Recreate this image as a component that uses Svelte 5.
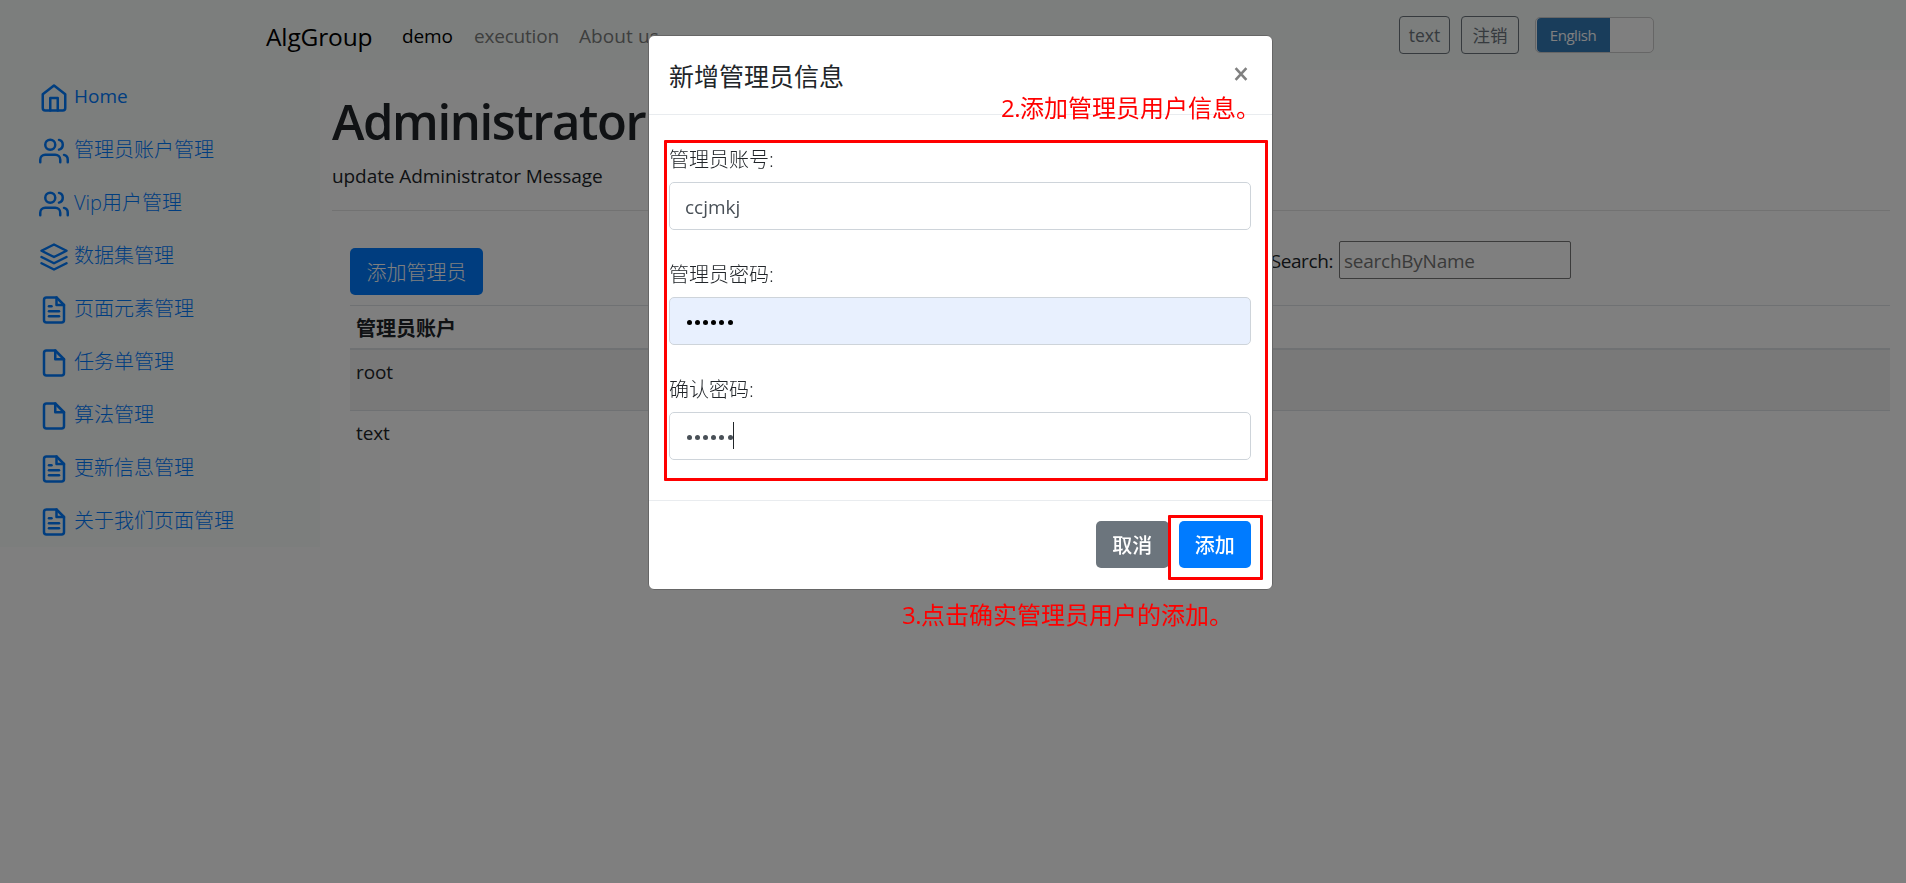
<script>
  const menu = [
    { icon: 'home', label: 'Home', latin: true },
    { icon: 'users', label: '管理员账户管理' },
    { icon: 'users', label: 'Vip用户管理' },
    { icon: 'layers', label: '数据集管理' },
    { icon: 'fileText', label: '页面元素管理' },
    { icon: 'file', label: '任务单管理' },
    { icon: 'file', label: '算法管理' },
    { icon: 'fileText', label: '更新信息管理' },
    { icon: 'fileText', label: '关于我们页面管理' }
  ];
  const icons = {
    home: ['M3 9l9-7 9 7v11a2 2 0 0 1-2 2H5a2 2 0 0 1-2-2z', 'M9 22V12h6v10'],
    users: [
      'M17 21v-2a4 4 0 0 0-4-4H5a4 4 0 0 0-4 4v2',
      'M5 7a4 4 0 1 0 8 0a4 4 0 1 0-8 0',
      'M23 21v-2a4 4 0 0 0-3-3.87',
      'M16 3.13a4 4 0 0 1 0 7.75'
    ],
    layers: ['M12 2L2 7l10 5 10-5z', 'M2 17l10 5 10-5', 'M2 12l10 5 10-5'],
    file: ['M13 2H6a2 2 0 0 0-2 2v16a2 2 0 0 0 2 2h12a2 2 0 0 0 2-2V9z', 'M13 2v7h7'],
    fileText: [
      'M14 2H6a2 2 0 0 0-2 2v16a2 2 0 0 0 2 2h12a2 2 0 0 0 2-2V8z',
      'M14 2v6h6',
      'M16 13H8',
      'M16 17H8',
      'M10 9H8'
    ]
  };
  const accounts = ['root', 'text'];
  const dots = [0, 1, 2, 3, 4, 5];
</script>

<div class="page">
  <header class="navbar">
    <span class="brand">AlgGroup</span>
    <nav>
      <span class="active demo">demo</span>
      <span class="execution">execution</span>
      <span class="about">About us</span>
    </nav>
    <div class="tools">
      <button class="outline user">text</button>
      <button class="outline logout">注销</button>
      <div class="switch"><span class="on">English</span></div>
    </div>
  </header>

  <div class="body">
    <aside>
      {#each menu as item}
        <div class="item">
          <svg viewBox="0 0 24 24">
            {#each icons[item.icon] as d}<path {d} />{/each}
          </svg>
          <span class:latin={item.latin}>{item.label}</span>
        </div>
      {/each}
    </aside>

    <main>
      <h1>Administrator</h1>
      <p class="lead"><span>update Administrator Message</span></p>
      <section>
        <div class="toolbar">
          <button class="primary add">添加管理员</button>
          <div class="search">
            <span>Search:</span>
            <div class="search-box"><span>searchByName</span></div>
          </div>
        </div>
        <div class="table">
          <div class="head">管理员账户</div>
          {#each accounts as name}
            <div class="row">{name}</div>
          {/each}
        </div>
      </section>
    </main>
  </div>
</div>

<div class="backdrop">
  <div class="modal">
    <div class="modal-head">
      <span class="title">新增管理员信息</span>
      <svg class="close" viewBox="0 0 14 14"><path d="M1.6 1.2L12.4 12.8M12.4 1.2L1.6 12.8" /></svg>
    </div>
    <div class="modal-body">
      <div class="field">
        <div class="label">管理员账号:</div>
        <div class="input"><span class="value">ccjmkj</span></div>
      </div>
      <div class="field">
        <div class="label">管理员密码:</div>
        <div class="input filled">
          {#each dots as _}<i></i>{/each}
        </div>
      </div>
      <div class="field">
        <div class="label">确认密码:</div>
        <div class="input">
          {#each dots as _}<i></i>{/each}<b></b>
        </div>
      </div>
    </div>
    <div class="modal-foot">
      <button class="secondary">取消</button>
      <button class="primary">添加</button>
    </div>
  </div>
</div>

<div class="mark form-mark"></div>
<div class="mark submit-mark"></div>
<div class="note form-note"><span>2.</span>添加管理员用户信息。</div>
<div class="note submit-note"><span>3.</span>点击确实管理员用户的添加。</div>

<style>
  :global(body) {
    margin: 0;
    overflow: hidden;
    background: #fff;
  }
  :global(#app) {
    font-family: 'Open Sans', 'Noto Sans CJK SC', sans-serif;
    font-size: 20px;
    line-height: 30px;
    color: #212529;
  }
  :global(#app *) {
    box-sizing: border-box;
  }
  button {
    font: inherit;
    padding: 0;
    margin: 0;
    white-space: nowrap;
  }
  .page {
    height: 883px;
  }
  .navbar {
    height: 70px;
    background: #f8fcfa;
    display: flex;
    align-items: center;
    padding: 0 252px 0 266px;
    white-space: nowrap;
  }
  .brand {
    width: 136px;
    font-size: 24.5px;
    letter-spacing: -0.15px;
    color: #000;
    padding-top: 4px;
  }
  nav {
    display: flex;
    font-size: 19px;
    color: #7c7e7d;
    padding-top: 2px;
  }
  nav .active {
    color: #000;
  }
  .demo { width: 72px; letter-spacing: -0.1px; }
  .execution { width: 105px; letter-spacing: -0.2px; }
  .about { letter-spacing: 0.1px; }
  .tools {
    margin-left: auto;
    display: flex;
    align-items: center;
  }
  .outline {
    height: 38px;
    border: 1px solid #6c757d;
    border-radius: 4px;
    background: transparent;
    color: #6c757d;
    font-size: 17.5px;
  }
  .user { width: 51px; margin-right: 11px; }
  .logout { width: 58px; margin-right: 16px; }
  .switch {
    width: 119px;
    height: 36px;
    border: 1px solid #ccc;
    border-radius: 5px;
    background: #fff;
    padding: 0 0 0 1px;
  }
  .on {
    display: block;
    width: 73px;
    height: 34px;
    line-height: 35px;
    border-radius: 4px 0 0 4px;
    background: #337ab7;
    color: #fff;
    font-size: 15px;
    letter-spacing: -0.45px;
    padding-right: 1px;
    text-align: center;
  }
  .body {
    display: flex;
    align-items: flex-start;
  }
  aside {
    width: 320px;
    background: #f8fcfa;
    color: #007bff;
    font-weight: 300;
  }
  .item {
    height: 53px;
    padding: 13px 0 0 39px;
    display: flex;
    align-items: flex-start;
    gap: 5px;
  }
  .item span {
    margin-top: -1px;
  }
  .item .latin {
    margin-top: -2px;
    font-size: 19px;
    font-weight: 400;
    letter-spacing: 0;
  }
  .item svg {
    width: 30px;
    height: 30px;
    fill: none;
    stroke: currentColor;
    stroke-width: 2;
    stroke-linecap: round;
    stroke-linejoin: round;
  }
  main {
    flex: 1;
    padding: 21px 16px 0 12px;
  }
  h1 {
    margin: 0;
    font-size: 49px;
    line-height: 60px;
    font-weight: 600;
    letter-spacing: -1.4px;
  }
  .lead {
    margin: 0;
    height: 60px;
    padding-top: 10px;
    border-bottom: 1px solid #e5e5e5;
    font-size: 19px;
    letter-spacing: -0.08px;
  }
  section {
    padding: 30px 0 0 18px;
  }
  .toolbar {
    height: 64px;
    display: flex;
    align-items: flex-start;
    justify-content: space-between;
    padding-right: 319px;
  }
  .primary,
  .secondary {
    height: 47px;
    border: 0;
    border-radius: 5px;
    color: #fff;
    background: #007bff;
    padding-top: 2px;
  }
  .secondary {
    background: #6c757d;
  }
  .add {
    width: 133px;
    margin-top: 7px;
    font-weight: 300;
  }
  .search {
    display: flex;
    align-items: center;
    font-size: 19px;
    letter-spacing: -0.4px;
    gap: 6px;
  }
  .search-box {
    width: 232px;
    height: 38px;
    border: 1px solid #767676;
    border-radius: 2px;
    color: #757575;
    padding: 4px 0 0 4px;
    letter-spacing: -0.25px;
  }
  .search > span {
    padding-top: 1px;
  }
  .head {
    height: 45px;
    border-top: 1px solid #dee2e6;
    border-bottom: 2px solid #dee2e6;
    padding: 8px 6px 0;
    font-weight: 700;
  }
  .row {
    height: 61px;
    padding: 7px 6px;
    font-size: 19px;
    letter-spacing: -0.1px;
  }
  .row:nth-child(2) {
    background: #f2f2f2;
    border-bottom: 1px solid #dee2e6;
  }
  .backdrop {
    position: fixed;
    inset: 0;
    background: rgba(0, 0, 0, 0.5);
    display: flex;
    justify-content: center;
    align-items: flex-start;
    padding: 35px 0 0 15px;
  }
  .modal {
    width: 625px;
    height: 555px;
    background: #fff;
    border: 1px solid #666;
    border-radius: 6px;
    display: flex;
    flex-direction: column;
  }
  .modal-head {
    height: 79px;
    border-bottom: 1px solid #e9ecef;
    padding: 0 24px 0 20px;
    display: flex;
    justify-content: space-between;
    align-items: center;
  }
  .title {
    font-size: 25px;
    padding-top: 2px;
  }
  .close {
    width: 14px;
    height: 14px;
    margin-top: -2px;
    fill: none;
    stroke: #808080;
    stroke-width: 2.6;
  }
  .modal-body {
    height: 386px;
    padding: 30px 21px 0 20px;
    border-bottom: 1px solid #e9ecef;
  }
  .field {
    height: 115px;
  }
  .label {
    height: 37px;
    font-weight: 300;
  }
  .input {
    height: 48px;
    border: 1px solid #ced4da;
    border-radius: 5px;
    padding-left: 15px;
    display: flex;
    align-items: center;
    color: #495057;
  }
  .value {
    font-size: 19px;
    padding-top: 1px;
    letter-spacing: 0;
  }
  .filled {
    background: #e8f0fe;
    color: #000;
  }
  .input i {
    width: 5px;
    height: 5px;
    border-radius: 50%;
    background: currentColor;
    margin: 2px 1.6px 0;
  }
  .input b {
    width: 1px;
    height: 27px;
    background: #212529;
    margin: -2px 0 0 -1px;
  }
  .modal-foot {
    flex: 1;
    display: flex;
    justify-content: flex-end;
    gap: 10px;
    padding: 20px 21px 0;
  }
  .modal-foot button {
    width: 72.5px;
    font-weight: 500;
    padding-top: 3px;
  }
  .mark {
    position: absolute;
    border: 3px solid #f00;
    border-radius: 1px;
  }
  .form-mark {
    left: 664px;
    top: 140px;
    width: 604px;
    height: 341px;
  }
  .submit-mark {
    left: 1168px;
    top: 515px;
    width: 95px;
    height: 65px;
  }
  .note {
    position: absolute;
    font-family: 'Noto Sans CJK SC', sans-serif;
    font-size: 24px;
    line-height: 30px;
    white-space: nowrap;
    color: #f00;
  }
  .note span {
    font-family: 'Open Sans', sans-serif;
    letter-spacing: -0.5px;
  }
  .form-note {
    left: 1001px;
    top: 92px;
  }
  .submit-note {
    left: 902px;
    top: 599px;
  }
</style>
